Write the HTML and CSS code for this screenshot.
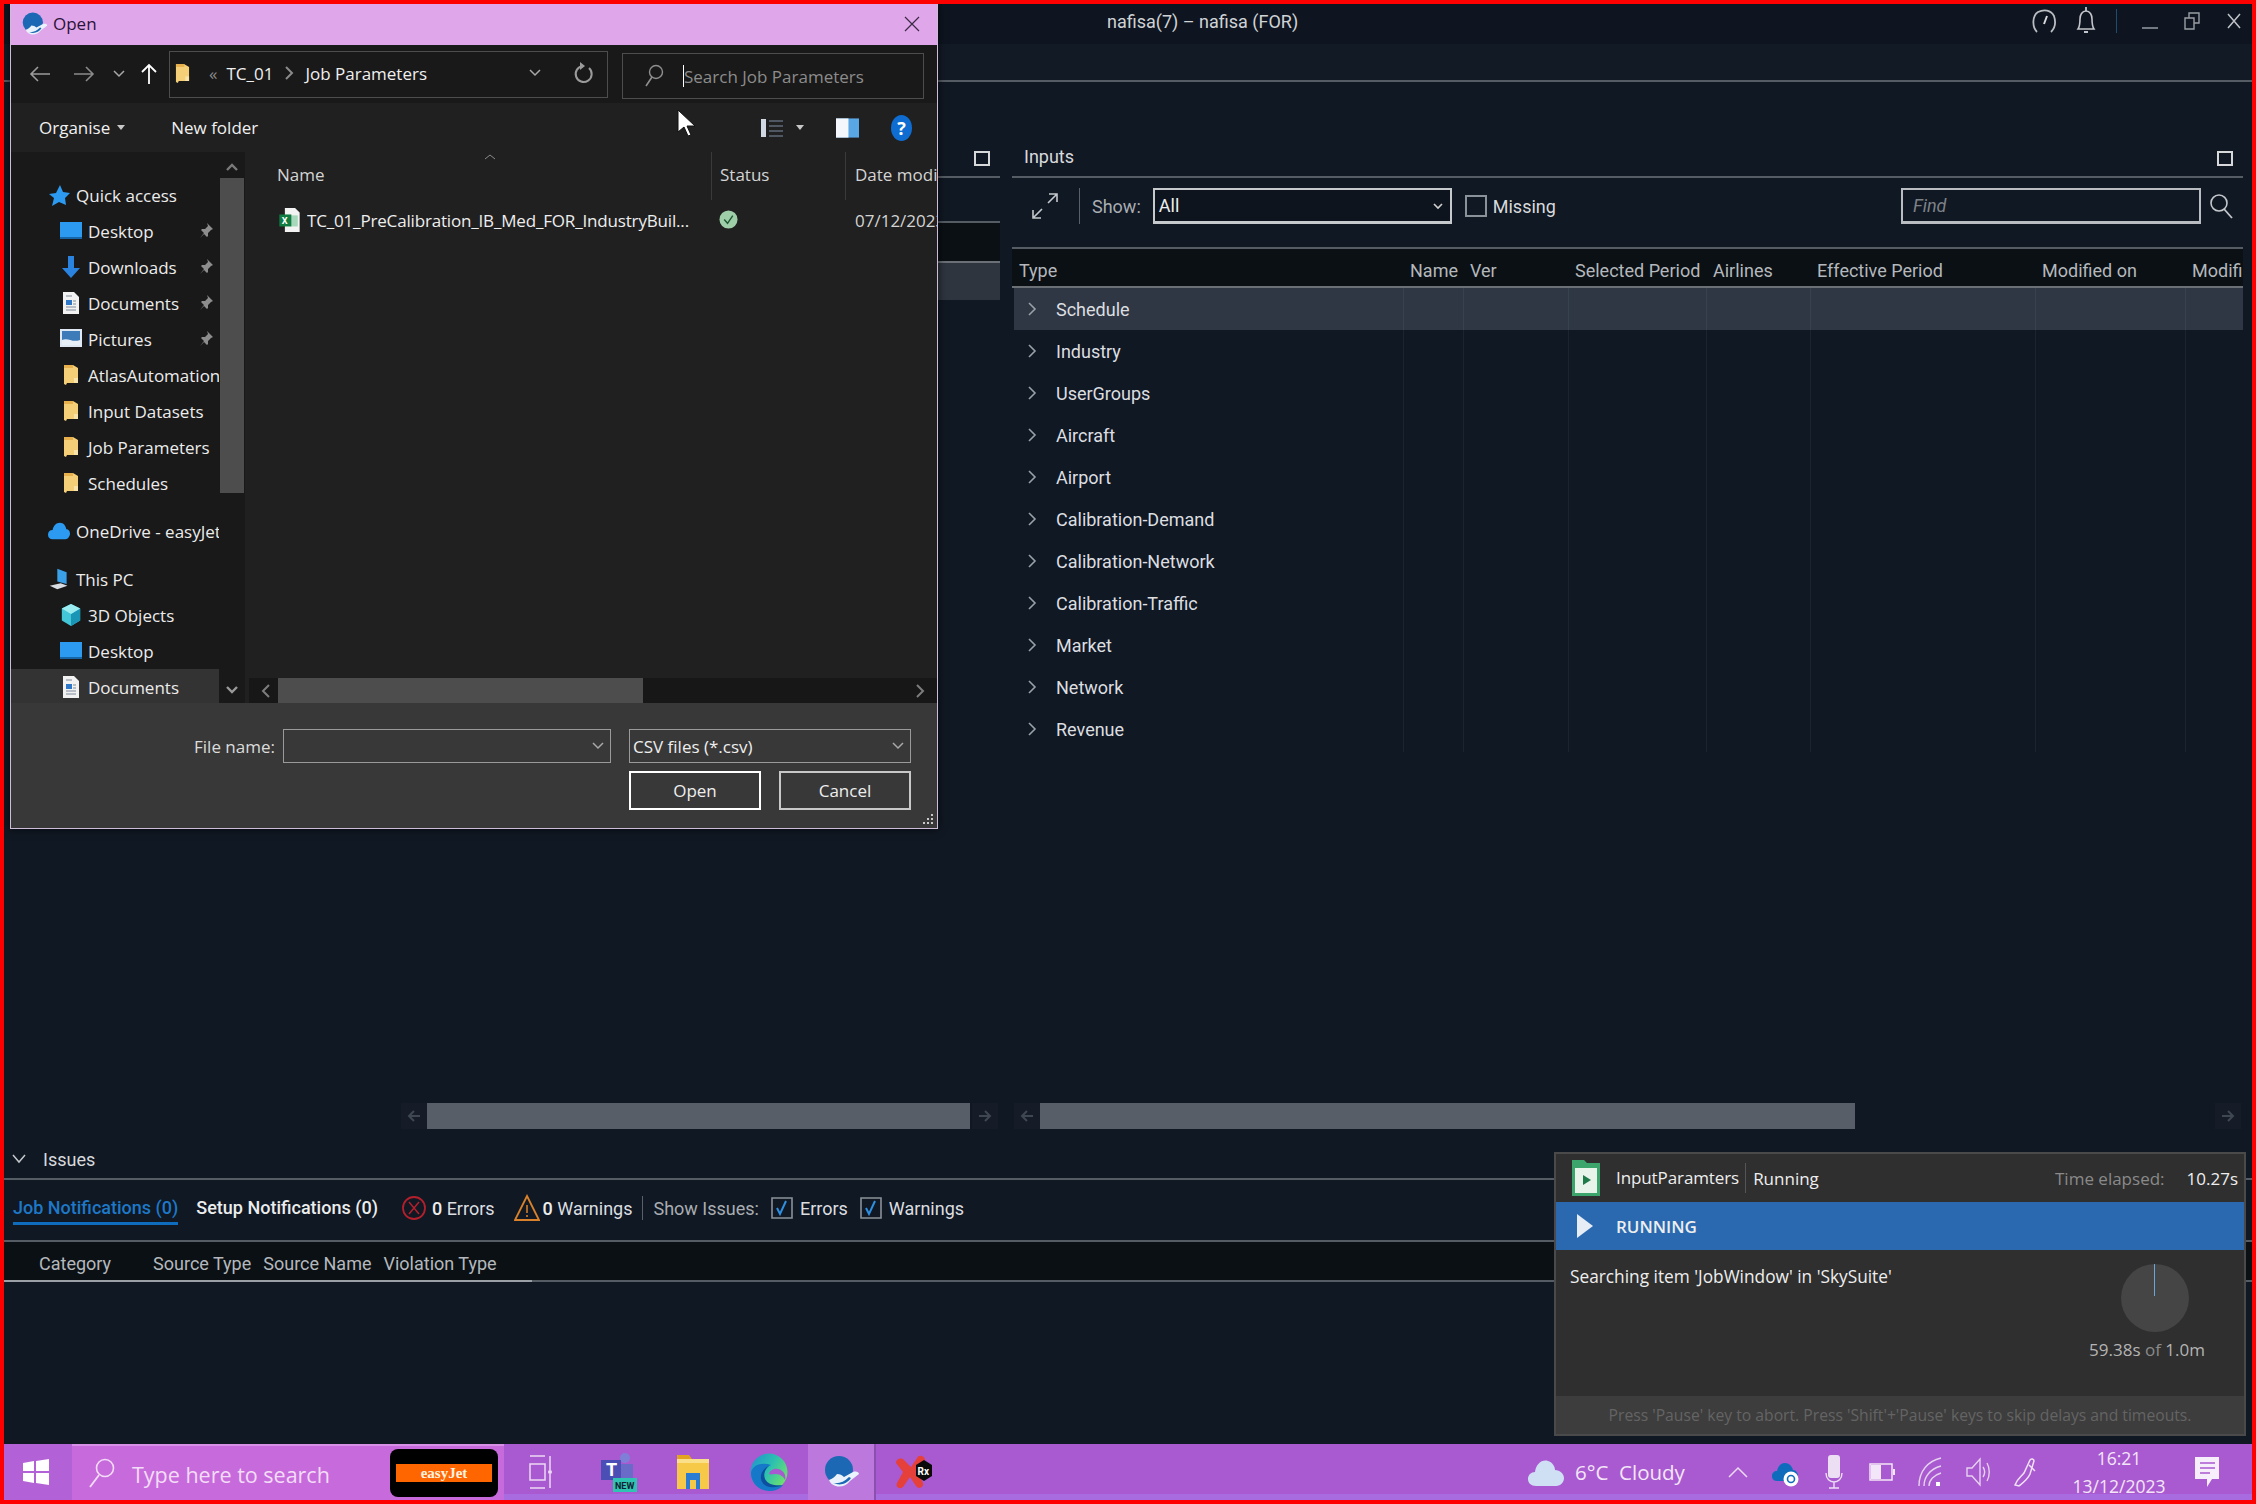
FILE: index.html
```html
<!DOCTYPE html><html>
<head><title>nafisa(7) - nafisa (FOR)</title>
	<link rel="stylesheet" href="styles.css">
</head><body>
<svg class="sprite" width="0" height="0">
	<symbol id="folder" viewBox="0 0 16 22"><path d="M1 1h9l5 3v15H4l-1 2-2-1z" fill="#f5cf78"/><path d="M1 1h9v3H1z" fill="#e8b04c"/><path d="M11 14h4v5h-4z" fill="#fae3a8"/></symbol>
	<symbol id="pin" viewBox="0 0 16 16"><path d="M9 1l6 6-2 1-3 3 0 3-1 1-3-3-4 4 4-5-3-3 1-1h3l3-3z" fill="#8d8d8d"/></symbol>
	<symbol id="chev" viewBox="0 0 12 16"><path d="M3 2l6 6-6 6" fill="none" stroke="#9aa0a8" stroke-width="1.6"/></symbol>
	<symbol id="down" viewBox="0 0 12 8"><path d="M1 1l5 5 5-5" fill="none" stroke="#a8a8a8" stroke-width="1.5"/></symbol>
	<symbol id="desktop" viewBox="0 0 22 18"><path d="M0 0h22v15H0z" fill="#2b9af0"/><path d="M0 15h22v2H0z" fill="#1565a8"/></symbol>
	<symbol id="doc" viewBox="0 0 18 22"><path d="M1 0h11l5 5v17H1z" fill="#f2f2f2"/><path d="M4 8h6v5H4z" fill="#2f78c8"/><path d="M4 4h6M4 15h10M4 18h10M11 9h3M11 12h3" stroke="#7c8a99" stroke-width="1.2"/></symbol>
	<symbol id="brand" viewBox="0 0 36 32"><circle cx="15" cy="14" r="14" fill="#1d68b4"/><path d="M5 24c3-1 6-3 8-6 3 0 5 1 7 3l9-5c3-1 6 0 6 2l-9 7c-6 8-18 7-21-1z" fill="#eaf3fb"/><path d="M9 27c6 1 11-1 16-6l2 1c-4 6-11 8-18 5z" fill="#1d68b4"/></symbol>
</svg>

<div class="screen">
	<header class="titlebar">
		<div class="app-title">nafisa(7) – nafisa (FOR)</div>
		<div class="win-tools">
			<svg class="tool-gauge" viewBox="0 0 26 28"><path d="M6 25C1 20 1 9 7 5c6-3 13-2 16 4 2 6 1 12-3 16" fill="none" stroke="#b9bdc2" stroke-width="1.8"/><path d="M13 17l3-8" stroke="#d8dadd" stroke-width="2"/></svg>
			<svg class="tool-bell" viewBox="0 0 22 30"><path d="M3 23c2-3 2-6 2-10s2-8 6-8 6 4 6 8 0 7 2 10z" fill="none" stroke="#c3c6ca" stroke-width="1.6"/><path d="M11 1v4M9 26h4" stroke="#c3c6ca" stroke-width="1.8"/></svg>
			<span class="tool-sep"></span>
			<svg class="tool-min" viewBox="0 0 16 4"><path d="M0 2h16" stroke="#8f949a" stroke-width="1.6"/></svg>
			<svg class="tool-max" viewBox="0 0 16 18"><path d="M1 6h9v11H1zM5 6V1h10v10h-5" fill="none" stroke="#9a9ea3" stroke-width="1.4"/></svg>
			<svg class="tool-close" viewBox="0 0 14 16"><path d="M1 1l12 14M13 1L1 15" stroke="#c0c3c7" stroke-width="1.5"/></svg>
		</div>
	</header>
	<div class="menubar"></div>

	<div class="workspace">
		<section class="panel panel-left">
			<div class="panel-head"><span></span><i class="panel-box"></i></div>
			<div class="left-tools"></div>
			<div class="left-cols"></div>
			<div class="left-row"></div>
			<div class="panel-fill"></div>
			<div class="hscroll"><svg class="arrow" viewBox="0 0 14 14"><path d="M13 7H2M7 2L2 7l5 5" fill="none" stroke="#3f4753" stroke-width="2"/></svg><div class="thumb thumb-a"></div><svg class="arrow arrow-end" viewBox="0 0 14 14"><path d="M1 7h11M7 2l5 5-5 5" fill="none" stroke="#3f4753" stroke-width="2"/></svg></div>
		</section>

		<section class="panel panel-right">
			<div class="panel-head"><span class="panel-name">Inputs</span><i class="panel-box"></i></div>
			<div class="input-tools">
				<svg class="expand" viewBox="0 0 26 26"><path d="M16 10L25 1M17 1h8v8M10 16l-9 9M1 17v8h8" fill="none" stroke="#c4c7cb" stroke-width="1.6"/></svg>
				<span class="v-sep"></span>
				<label class="show-label">Show:</label>
				<div class="combo"><span>All</span><svg viewBox="0 0 12 8"><path d="M2 2l4 4 4-4" fill="none" stroke="#d0d0d0" stroke-width="1.6"/></svg></div>
				<span class="check"></span>
				<span class="missing">Missing</span>
				<div class="find">Find</div>
				<svg class="find-ico" viewBox="0 0 24 26"><circle cx="10" cy="10" r="8" fill="none" stroke="#c4c7cb" stroke-width="1.6"/><path d="M15 16l8 9" stroke="#c4c7cb" stroke-width="1.8"/></svg>
			</div>
			<div class="cols cols-head">
				<span>Type</span><span>Name</span><span>Ver</span><span>Selected Period</span><span>Airlines</span><span>Effective Period</span><span>Modified on</span><span>Modifi</span>
			</div>
			<div class="rows">
				<div class="row row-on"><svg><use href="#chev"/></svg>Schedule</div>
				<div class="row"><svg><use href="#chev"/></svg>Industry</div>
				<div class="row"><svg><use href="#chev"/></svg>UserGroups</div>
				<div class="row"><svg><use href="#chev"/></svg>Aircraft</div>
				<div class="row"><svg><use href="#chev"/></svg>Airport</div>
				<div class="row"><svg><use href="#chev"/></svg>Calibration-Demand</div>
				<div class="row"><svg><use href="#chev"/></svg>Calibration-Network</div>
				<div class="row"><svg><use href="#chev"/></svg>Calibration-Traffic</div>
				<div class="row"><svg><use href="#chev"/></svg>Market</div>
				<div class="row"><svg><use href="#chev"/></svg>Network</div>
				<div class="row"><svg><use href="#chev"/></svg>Revenue</div>
			</div>
			<div class="panel-fill"></div>
			<div class="hscroll hscroll-r"><svg class="arrow" viewBox="0 0 14 14"><path d="M13 7H2M7 2L2 7l5 5" fill="none" stroke="#3f4753" stroke-width="2"/></svg><div class="thumb thumb-b"></div><svg class="arrow arrow-end" viewBox="0 0 14 14"><path d="M1 7h11M7 2l5 5-5 5" fill="none" stroke="#3f4753" stroke-width="2"/></svg></div>
		</section>
	</div>

	<section class="issues">
		<div class="issues-head">
			<svg viewBox="0 0 14 10"><path d="M1 1l6 7 6-7" fill="none" stroke="#c4c7cb" stroke-width="1.5"/></svg>
			<span>Issues</span>
		</div>
		<div class="issues-tabs">
			<span class="tab tab-on">Job Notifications (0)</span>
			<span class="tab tab-b">Setup Notifications (0)</span>
			<svg class="err-ico" viewBox="0 0 24 28"><circle cx="12" cy="14" r="11" fill="none" stroke="#b3202c" stroke-width="1.800"/><path d="M7 8l10 12M17 8L7 20" stroke="#b3202c" stroke-width="1.500"/></svg>
			<span class="count"><b>0</b> Errors</span>
			<svg class="warn-ico" viewBox="0 0 26 28"><path d="M13 2l12 24H1z" fill="none" stroke="#d9822b" stroke-width="1.800"/><path d="M13 11v8M13 21v2" stroke="#d9822b" stroke-width="1.500"/></svg>
			<span class="count"><b>0</b> Warnings</span>
			<span class="v-sep tab-sep"></span>
			<span class="show-issues">Show Issues:</span>
			<svg class="tick" viewBox="0 0 22 22"><path d="M1 1h20v20H1z" fill="none" stroke="#8b9199" stroke-width="1.600"/><path d="M6 11l3 6 6-13" fill="none" stroke="#2f8fe0" stroke-width="2"/></svg>
			<span class="tick-label">Errors</span>
			<svg class="tick" viewBox="0 0 22 22"><path d="M1 1h20v20H1z" fill="none" stroke="#8b9199" stroke-width="1.600"/><path d="M6 11l3 6 6-13" fill="none" stroke="#2f8fe0" stroke-width="2"/></svg>
			<span class="tick-label">Warnings</span>
		</div>
		<div class="issue-bar">
			<div class="issue-cols">
				<span class="c1">Category</span><span class="c2">Source Type</span><span class="c3">Source Name</span><span class="c4">Violation Type</span>
			</div>
		</div>
	</section>

	<footer class="taskbar">
		<div class="start"><svg viewBox="0 0 26 26"><path d="M0 4l11-2v10H0zM13 2l13-2v12H13zM0 14h11v10L0 22zM13 14h13v12l-13-2z" fill="#fff"/></svg></div>
		<div class="search">
			<svg viewBox="0 0 26 30"><circle cx="16" cy="10" r="8.500" fill="none" stroke="#f3dcf7" stroke-width="1.600"/><path d="M10 17L1 29" stroke="#f3dcf7" stroke-width="1.800"/></svg>
			<span class="search-text">Type here to search</span>
			<div class="easy"><span>easyJet</span></div>
		</div>
		<div class="task"><svg class="ico-view" viewBox="0 0 26 34"><path d="M1 1h15M1 33h15M1 9h15v16H1zM21 1v14M21 19v14" fill="none" stroke="#ecd9f4" stroke-width="1.500"/><circle cx="21" cy="17" r="2" fill="#ecd9f4"/></svg></div>
		<div class="task"><svg class="ico-teams" viewBox="0 0 38 40"><circle cx="26" cy="6" r="5" fill="#7f7fd8"/><path d="M18 12h16v18H18z" fill="#6a6bc8"/><path d="M2 8h20v20H2z" fill="#4b4fb5"/><text x="7" y="24" class="teams-t">T</text><path d="M14 26h24v14H14z" fill="#2fc4b2"/><text x="16" y="37" class="teams-new">NEW</text></svg></div>
		<div class="task"><svg class="ico-explorer" viewBox="0 0 34 36"><path d="M1 1h12l3 4H1z" fill="#e3a520"/><path d="M1 5h32v30H1z" fill="#f7c948"/><path d="M1 5h32v4H1z" fill="#fbe08a"/><path d="M10 19h14v16H10z" fill="#2b7cd3"/><path d="M14 26h6v9h-6z" fill="#f7c948"/></svg></div>
		<div class="task"><svg class="ico-edge" viewBox="0 0 38 38"><defs><linearGradient id="eg" x1="0" y1="0" x2="1" y2=".6"><stop offset="0" stop-color="#1f8fd0"/><stop offset=".55" stop-color="#2cc0b0"/><stop offset="1" stop-color="#6be070"/></linearGradient></defs><circle cx="19" cy="19" r="18.500" fill="url(#eg)"/><path d="M1 20C1 30 9 38 19 38c6 0 11-2 14-6-7 3-15 1-18-5-3-7 1-13 6-15C12 9 2 12 1 20z" fill="#1578c8"/><path d="M11 26c1 7 11 11 22 6-7 1-15 0-18-6-2-5 0-10 4-13-5 2-9 7-8 13z" fill="#0d4f9e"/><path d="M19 21c1-5 9-7 13-3 3 2 4 6 3 9-1-3-5-6-9-6-3 0-5 1-7 0z" fill="#a95ad0"/></svg></div>
		<div class="task task-on"><svg class="ico-brand"><use href="#brand"/></svg></div>
		<span class="task-sep"></span>
		<div class="task"><svg class="ico-rx" viewBox="0 0 38 36"><path d="M1 9c0-4 5-6 8-3l7 7 6-9c2-4 8-2 8 2l-7 13 5 10c1 4-4 7-7 3l-6-9-7 10c-3 3-8 0-6-4l6-11z" fill="#e5403a"/><path d="M21 11l8-5 8 5v11l-8 5-8-5z" fill="#0b0b0b"/><text x="22.500" y="21" class="rx-t">Rx</text></svg></div>

		<div class="weather">
			<svg viewBox="0 0 38 32"><path d="M9 30c-5 0-8-3-8-7s3-7 7-7c1-8 7-13 13-11 4 1 7 5 7 9 5 0 9 4 9 8s-3 8-8 8z" fill="#cfe0f4"/></svg>
			<span>6°C&nbsp; Cloudy</span>
		</div>
		<div class="tray"><svg class="tray-chev" viewBox="0 0 20 12"><path d="M1 11l9-9 9 9" fill="none" stroke="#ecd9f4" stroke-width="1.500"/></svg></div>
		<div class="tray"><svg class="tray-cloud" viewBox="0 0 28 30"><path d="M5 24c-4 0-5-3-5-5 0-3 2-5 5-5 1-5 4-8 8-8s7 3 8 7c3 0 5 3 5 6s-2 5-5 5z" fill="#0f6cbd"/><circle cx="19" cy="22" r="7.500" fill="#fff"/><circle cx="19" cy="22" r="3.500" fill="none" stroke="#0f6cbd" stroke-width="1.600"/></svg></div>
		<div class="tray"><svg class="tray-mic" viewBox="0 0 18 34"><rect x="3" y="0" width="12" height="23" rx="3" fill="#ecdff3"/><path d="M1 18c0 6 4 9 8 9s8-3 8-9M9 27v6M4 33h10" fill="none" stroke="#ecdff3" stroke-width="1.400"/></svg></div>
		<div class="tray"><svg class="tray-batt" viewBox="0 0 26 20"><path d="M1 2h22v16H1z" fill="none" stroke="#f3e6f8" stroke-width="1.500"/><path d="M2 3h10v14H2z" fill="#f3e6f8"/><path d="M24 7h2v6h-2z" fill="#f3e6f8"/></svg></div>
		<div class="tray"><svg class="tray-wifi" viewBox="0 0 24 30"><path d="M1 29C1 14 10 4 23 1M6 29c0-9 6-17 17-20M11 29c0-6 5-11 12-13" fill="none" stroke="#e6d2ef" stroke-width="1.400"/><path d="M18 25h4v4h-4z" fill="#fff"/></svg></div>
		<div class="tray"><svg class="tray-vol" viewBox="0 0 24 30"><path d="M1 11h5l8-9v26l-8-9H1z" fill="none" stroke="#e6d2ef" stroke-width="1.400"/><path d="M17 10c2 3 2 7 0 10M21 6c3 5 3 13 0 18" fill="none" stroke="#e6d2ef" stroke-width="1.400"/></svg></div>
		<div class="tray"><svg class="tray-pen" viewBox="0 0 24 30"><path d="M1 28c2-6 6-8 9-12l6-13c1-2 4-1 4 1l-4 13c-2 5-6 8-11 12zM15 8l6 6" fill="none" stroke="#f0e2f6" stroke-width="1.500"/></svg></div>
		<div class="clock"><span>16:21</span><span>13/12/2023</span></div>
		<div class="notif-btn"><svg viewBox="0 0 26 30"><path d="M1 0h24v22h-7l-5 8v-8H1z" fill="#f7eefb"/><path d="M6 6h15M6 11h15M6 16h10" stroke="#a95ad0" stroke-width="1.500"/></svg></div>
	</footer>

	<!-- file dialog -->
	<div class="dialog">
		<div class="dlg-title">
			<svg class="dlg-brand"><use href="#brand"/></svg>
			<span>Open</span>
			<svg class="dlg-close" viewBox="0 0 16 16"><path d="M1 1l14 14M15 1L1 15" stroke="#3a2a44" stroke-width="1.200"/></svg>
		</div>
		<div class="dlg-nav">
			<div class="nav-btn"><svg class="arr" viewBox="0 0 22 18"><path d="M21 9H2M9 2L2 9l7 7" fill="none" stroke="#9b9b9b" stroke-width="1.600"/></svg></div>
			<div class="nav-btn"><svg class="arr" viewBox="0 0 22 18"><path d="M1 9h19M13 2l7 7-7 7" fill="none" stroke="#8a8a8a" stroke-width="1.600"/></svg></div>
			<div class="nav-btn nav-small"><svg class="mini"><use href="#down"/></svg></div>
			<div class="nav-btn nav-up"><svg class="arr-up" viewBox="0 0 18 22"><path d="M9 21V2M2 9l7-7 7 7" fill="none" stroke="#fff" stroke-width="1.800"/></svg></div>
			<div class="address">
				<svg class="addr-folder"><use href="#folder"/></svg>
				<span class="crumb-more">«</span>
				<span>TC_01</span>
				<svg class="crumb-chev" viewBox="0 0 12 16"><path d="M3 2l6 6-6 6" fill="none" stroke="#8a8a8a" stroke-width="2"/></svg>
				<span>Job Parameters</span>
				<svg class="addr-down"><use href="#down"/></svg>
				<svg class="addr-ref" viewBox="0 0 20 22"><path d="M16 6a8 8 0 1 1-6-2" fill="none" stroke="#9b9b9b" stroke-width="2"/><path d="M7 0v8l5-4z" fill="#9b9b9b"/></svg>
			</div>
			<div class="dlg-search">
				<svg viewBox="0 0 20 24"><circle cx="12" cy="8" r="6.500" fill="none" stroke="#8f8f8f" stroke-width="1.400"/><path d="M8 13l-6 9" stroke="#8f8f8f" stroke-width="1.600"/></svg>
				<span class="caret"></span><span class="ph">Search Job Parameters</span>
			</div>
		</div>
		<div class="dlg-tools">
			<span>Organise</span><i class="tri"></i>
			<span class="new-folder">New folder</span>
			<div class="tools-right">
				<svg class="ico-list" viewBox="0 0 22 20"><path d="M0 1h5v18H0z" fill="#cfd8e3"/><path d="M8 3h14M8 8h14M8 13h14M8 18h14" stroke="#7f8fa3" stroke-width="1.200"/></svg>
				<i class="tri tri-view"></i>
				<svg class="ico-pane" viewBox="0 0 24 20"><path d="M0 0h24v20H0z" fill="#5aa7e6"/><path d="M0 0h13v20H0z" fill="#f4f7fb"/></svg>
				<span class="help">?</span>
			</div>
		</div>
		<div class="dlg-main">
			<nav class="tree">
				<div class="node node-top"><svg class="nico" viewBox="0 0 22 22"><path d="M12 1l3 7 7 1-5 5 1 7-7-3-7 4 2-8-5-4 7-1z" fill="#2b9af0"/></svg><span>Quick access</span></div>
				<div class="node"><svg class="nico"><use href="#desktop"/></svg><span>Desktop</span><svg class="pin"><use href="#pin"/></svg></div>
				<div class="node"><svg class="nico" viewBox="0 0 22 22"><path d="M8 0h6v12h6L11 22 2 12h6z" fill="#2b83e0"/></svg><span>Downloads</span><svg class="pin"><use href="#pin"/></svg></div>
				<div class="node"><svg class="nico"><use href="#doc"/></svg><span>Documents</span><svg class="pin"><use href="#pin"/></svg></div>
				<div class="node"><svg class="nico" viewBox="0 0 22 20"><path d="M0 0h22v18H0z" fill="#dfe9f3"/><path d="M2 2h18v14H2z" fill="#3d7cb8"/><path d="M2 11c6-3 10 3 18 0v5H2z" fill="#e8f1f8"/></svg><span>Pictures</span><svg class="pin"><use href="#pin"/></svg></div>
				<div class="node"><svg class="nico"><use href="#folder"/></svg><span>AtlasAutomation</span></div>
				<div class="node"><svg class="nico"><use href="#folder"/></svg><span>Input Datasets</span></div>
				<div class="node"><svg class="nico"><use href="#folder"/></svg><span>Job Parameters</span></div>
				<div class="node"><svg class="nico"><use href="#folder"/></svg><span>Schedules</span></div>
				<div class="node node-top node-group"><svg class="nico" viewBox="0 0 24 18"><path d="M5 18c-3 0-5-2-5-5s2-5 5-5c1-5 4-8 8-8s6 3 7 7c3 0 4 3 4 5s-2 6-5 6z" fill="#2b9af0"/></svg><span>OneDrive - easyJet</span></div>
				<div class="node node-top node-group"><svg class="nico" viewBox="0 0 24 26"><path d="M10 1l11 4v14l-11-3z" fill="#3aa0e8"/><path d="M1 21l13-3 8 3-12 4z" fill="#d8dde3"/></svg><span>This PC</span></div>
				<div class="node"><svg class="nico" viewBox="0 0 22 24"><path d="M11 0l10 5v13l-10 6L1 18V5z" fill="#42c6d8"/><path d="M11 11l10-6v13l-10 6z" fill="#1a95b5"/><path d="M11 0l10 5-10 6L1 5z" fill="#9becf0"/></svg><span>3D Objects</span></div>
				<div class="node"><svg class="nico"><use href="#desktop"/></svg><span>Desktop</span></div>
				<div class="node node-sel"><svg class="nico"><use href="#doc"/></svg><span>Documents</span></div>
			</nav>
			<div class="vbar">
				<svg viewBox="0 0 14 10"><path d="M2 8l5-5 5 5" fill="none" stroke="#7a7a7a" stroke-width="2.400"/></svg>
				<div class="vthumb"></div>
				<svg class="vbar-end" viewBox="0 0 14 10"><path d="M2 2l5 5 5-5" fill="none" stroke="#9a9a9a" stroke-width="2.400"/></svg>
			</div>
			<div class="files">
				<div class="files-head">
					<span class="fh-name">Name</span><span class="fh-status">Status</span><span class="fh-date">Date modified</span>
					<svg class="sort" viewBox="0 0 12 6"><path d="M1 5l5-4 5 4" fill="none" stroke="#8a8a8a" stroke-width="1"/></svg>
				</div>
				<div class="file-row">
					<svg class="xls" viewBox="0 0 22 26"><path d="M6 0h11l5 5v21H6z" fill="#f3f3f3"/><path d="M12 8h8v12h-8z" fill="#a7d8bb"/><path d="M0 7h13v13H0z" fill="#107c41"/><text x="2.500" y="17" class="xls-t">X</text></svg>
					<span class="file-name">TC_01_PreCalibration_IB_Med_FOR_IndustryBuil...</span>
					<svg class="synced" viewBox="0 0 20 20"><circle cx="10" cy="10" r="9.500" fill="#9fcfa8"/><path d="M5.500 10l3.500 4 5.500-8" fill="none" stroke="#1f5a35" stroke-width="1.500"/></svg>
					<span class="file-date">07/12/2023 16:05</span>
				</div>
				<div class="files-fill"></div>
				<div class="files-scroll">
					<svg viewBox="0 0 10 14"><path d="M8 1L2 7l6 6" fill="none" stroke="#7d7d7d" stroke-width="2"/></svg>
					<div class="fthumb"></div>
					<svg class="fs-end" viewBox="0 0 10 14"><path d="M2 1l6 6-6 6" fill="none" stroke="#7d7d7d" stroke-width="2"/></svg>
				</div>
			</div>
		</div>
		<div class="dlg-bottom">
			<div class="name-row">
				<label>File name:</label>
				<div class="field field-name"><svg><use href="#down"/></svg></div>
				<div class="field field-type"><span>CSV files (*.csv)</span><svg><use href="#down"/></svg></div>
			</div>
			<div class="btn-row">
				<button class="btn btn-main">Open</button>
				<button class="btn">Cancel</button>
			</div>
			<svg class="grip" viewBox="0 0 12 12"><path d="M9 0h2v2H9zM5 4h2v2H5zM9 4h2v2H9zM1 8h2v2H1zM5 8h2v2H5zM9 8h2v2H9z" fill="#c8c8c8"/></svg>
		</div>
	</div>

	<svg class="cursor" viewBox="0 0 20 26"><path d="M1 0v22l6-5 4 9 3-1-4-9h8z" fill="#fff" stroke="#111" stroke-width="1"/></svg>

	<!-- job progress popup -->
	<aside class="job">
		<div class="job-head">
			<svg class="job-ico" viewBox="0 0 28 36"><path d="M0 0h12l3 3h13v33H0z" fill="#3ba56c"/><path d="M3 8h22v25H3z" fill="#e8f3ea"/><path d="M11 15l8 5-8 5z" fill="#1f7a4a"/></svg>
			<span class="job-name">InputParamters</span>
			<span class="job-state">Running</span>
			<span class="job-time">Time elapsed:</span>
			<span class="job-secs">10.27s</span>
		</div>
		<div class="job-bar"><svg viewBox="0 0 16 24"><path d="M0 0l16 12L0 24z" fill="#e6edf5"/></svg><span>RUNNING</span></div>
		<div class="job-body">
			<p>Searching item 'JobWindow' in 'SkySuite'</p>
			<div class="job-wait">
				<div class="pie"></div>
				<div class="wait-text">59.38s <small>of</small> 1.0m</div>
			</div>
		</div>
		<div class="job-foot">Press 'Pause' key to abort. Press 'Shift'+'Pause' keys to skip delays and timeouts.</div>
	</aside>
</div>
</body></html>
```

FILE: styles.css
```css
html,body{margin:0;padding:0;background:#101823;}
body{font-family:Roboto,"Liberation Sans",sans-serif;font-size:18px;color:#d8dadd;}
svg{display:block;flex:none;}
.sprite{position:absolute;}
.screen{position:relative;box-sizing:border-box;width:2256px;height:1504px;border:4px solid #f00;display:flex;flex-direction:column;overflow:hidden;background:#101823;}

/* app chrome */
.titlebar{box-sizing:border-box;height:40px;flex:none;display:flex;align-items:center;padding-bottom:6px;background:#0e1520;}
.app-title{margin-left:1103px;color:#d0d3d6;}
.win-tools{margin-left:auto;display:flex;align-items:center;}
.tool-gauge{width:26px;height:28px;}
.tool-bell{width:22px;height:30px;margin-left:18px;}
.tool-sep{width:1px;height:24px;background:#1f4a73;margin-left:19px;}
.tool-min{width:16px;height:4px;margin:14px 0 0 25px;}
.tool-max{width:16px;height:18px;margin-left:26px;}
.tool-close{width:14px;height:16px;margin:0 11px 0 27px;}
.menubar{height:36px;flex:none;box-sizing:content-box;border-bottom:2px solid #565c64;background:#121a26;}

.workspace{flex:1;min-height:0;display:flex;padding:0 9px 0 399px;gap:12px;}
.panel{display:flex;flex-direction:column;}
.panel-left{width:597px;flex:none;}
.panel-right{flex:1;min-width:0;}
.panel-fill{flex:1;}
.panel-head{box-sizing:border-box;height:96px;flex:none;display:flex;align-items:flex-end;justify-content:space-between;border-bottom:2px solid #565c64;padding:0 10px 8px 12px;}
.panel-name{color:#d8dadd;line-height:22px;}
.panel-box{display:block;box-sizing:border-box;width:16px;height:15px;border:2px solid #d6d8da;margin-bottom:2px;}
.left-tools{height:43px;flex:none;border-bottom:2px solid #565c64;}
.left-cols{height:38px;flex:none;background:#0b1015;}
.left-row{height:39px;flex:none;border-top:2px solid #6b7076;background:#2e353f;box-sizing:border-box;}

.input-tools{box-sizing:border-box;height:71px;flex:none;display:flex;align-items:center;padding:11px 0 24px 18px;border-bottom:2px solid #565c64;}
.expand{width:26px;height:26px;margin:0 0 0 2px;}
.v-sep{display:block;width:1px;height:36px;background:#5a6068;margin-left:21px;}
.show-label{margin-left:12px;color:#a9adb2;}
.combo{box-sizing:border-box;width:299px;height:36px;margin-left:12px;border:2px solid #c7cacd;border-bottom-width:3px;display:flex;align-items:center;justify-content:space-between;padding:0 6px 0 4px;color:#eceded;background:#0e141d;}
.combo svg{width:12px;height:8px;}
.check{display:block;box-sizing:border-box;width:22px;height:22px;margin-left:13px;border:2px solid #8b9199;}
.missing{margin-left:6px;color:#d8dadd;}
.find{box-sizing:border-box;width:300px;height:36px;margin-left:auto;border:2px solid #b9bcc0;border-bottom-width:3px;padding:0 10px;line-height:32px;font-style:italic;color:#7d8288;}
.find-ico{width:24px;height:26px;margin:0 10px 0 8px;}

.cols{display:grid;grid-template-columns:391px 60px 105px 138px 104px 225px 150px 58px;}
.cols-head{box-sizing:border-box;height:39px;flex:none;align-items:center;padding-top:5px;background:#0b1015;border-bottom:2px solid #6b7076;color:#b4b8bc;}
.cols-head span{padding-left:7px;white-space:nowrap;overflow:hidden;}
.rows{flex:none;height:464px;margin-left:2px;background:
	linear-gradient(#1c2430,#1c2430) 389px 0/1px 100% no-repeat,
	linear-gradient(#1c2430,#1c2430) 449px 0/1px 100% no-repeat,
	linear-gradient(#1c2430,#1c2430) 554px 0/1px 100% no-repeat,
	linear-gradient(#1c2430,#1c2430) 692px 0/1px 100% no-repeat,
	linear-gradient(#1c2430,#1c2430) 796px 0/1px 100% no-repeat,
	linear-gradient(#1c2430,#1c2430) 1021px 0/1px 100% no-repeat,
	linear-gradient(#1c2430,#1c2430) 1171px 0/1px 100% no-repeat;}
.row{height:42px;display:flex;align-items:center;padding-left:12px;color:#dcdee0;}
.row svg{width:12px;height:16px;margin-right:18px;}
.row-on{background:rgba(160,170,185,.22);}

.hscroll{height:26px;flex:none;display:flex;margin-bottom:11px;margin-right:2px;}
.hscroll-r{padding-left:2px;}
.arrow{width:26px;height:26px;padding:6px;box-sizing:border-box;background:#151c27;}
.arrow-end{margin-left:auto;}
.thumb{height:26px;background:#575e68;}
.thumb-a{width:543px;}
.thumb-b{width:815px;}
.panel-left .hscroll{margin-left:-2px;}

/* issues */
.issues{height:304px;flex:none;display:flex;flex-direction:column;}
.issues-head{box-sizing:border-box;height:40px;flex:none;display:flex;align-items:center;padding-left:8px;border-bottom:2px solid #565c64;}
.issues-head svg{width:14px;height:10px;margin-right:17px;}
.issues-head span{color:#d8dadd;}
.issues-tabs{box-sizing:border-box;height:62px;flex:none;display:flex;align-items:center;padding:0 0 4px 9px;border-bottom:2px solid #565c64;color:#dcdee0;}
.tab{display:block;font-weight:500;padding:6px 0 4px;border-bottom:3px solid transparent;white-space:nowrap;}
.tab-on{color:#1e78c8;border-bottom-color:#0f6cbd;}
.tab-b{margin-left:18px;color:#eceded;}
.err-ico{width:24px;height:28px;margin:0 6px 0 24px;}
.warn-ico{width:26px;height:28px;margin:0 3px 0 19px;}
.count b{font-weight:500;color:#eceded;}
.tab-sep{height:24px;margin-left:10px;}
.show-issues{margin-left:10px;color:#a9adb2;}
.tick{width:22px;height:22px;margin:0 7px 0 12px;}
.tick-label{color:#dcdee0;}
.issue-bar{box-sizing:border-box;height:40px;flex:none;background:#0b1015;border-bottom:2px solid #565c64;}
.issue-cols{box-sizing:border-box;width:528px;height:40px;border-bottom:2px solid #9ba0a6;display:flex;align-items:center;color:#b4b8bc;padding-top:4px;}
.issue-cols span{white-space:nowrap;}
.c1{margin-left:35px;}
.c2{margin-left:42px;}
.c3{margin-left:12px;}
.c4{margin-left:12px;}

/* taskbar */
.taskbar{height:56px;flex:none;display:flex;align-items:center;background:linear-gradient(#a95ad0 90%,#a86be0 90%);color:#f3e6f8;}
.start{box-sizing:border-box;width:68px;height:56px;flex:none;display:flex;align-items:center;padding-left:19px;background:#b262d6;}
.start svg{width:26px;height:26px;}
.search{box-sizing:border-box;width:432px;height:56px;flex:none;display:flex;align-items:center;padding-left:17px;background:#c76bdc;border-top:2px solid #d88fe6;}
.search svg{width:26px;height:30px;}
.search-text{font-family:"Open Sans","Noto Sans",sans-serif;font-size:21.500px;color:#f3dcf7;margin-left:17px;white-space:nowrap;padding-top:2px;}
.easy{box-sizing:border-box;width:108px;height:48px;margin-left:auto;margin-right:6px;background:#000;border-radius:8px;display:flex;align-items:center;justify-content:center;}
.easy span{display:block;width:96px;height:18px;background:#ff6600;text-align:center;font:bold 15px/18px "Liberation Serif",serif;color:#fff3e2;}
.task{width:76px;height:56px;flex:none;display:flex;align-items:center;justify-content:center;}
.task-on{width:66px;background:#bd78dd;}
.task-sep{display:block;width:2px;height:56px;background:#8b4fae;flex:none;}
.ico-view{width:26px;height:34px;}
.ico-teams{width:38px;height:40px;}
.ico-explorer{width:34px;height:36px;margin-right:2px;}
.ico-edge{width:38px;height:38px;margin-right:3px;}
.ico-brand{width:36px;height:32px;margin-left:2px;}
.ico-rx{width:38px;height:36px;}
.teams-t{font:bold 18px Roboto,sans-serif;fill:#fff;}
.teams-new{font:bold 9px Roboto,sans-serif;fill:#123;}
.rx-t{font:bold 10px Roboto,sans-serif;fill:#fff;}
.weather{margin-left:auto;width:187px;flex:none;display:flex;align-items:center;font-family:"Open Sans","Noto Sans",sans-serif;font-size:20.500px;white-space:nowrap;}
.weather svg{width:38px;height:32px;margin-right:10px;}
.tray{width:48px;height:56px;flex:none;display:flex;align-items:center;justify-content:center;}
.tray-chev{width:20px;height:12px;}
.tray-cloud{width:28px;height:30px;}
.tray-mic{width:18px;height:34px;}
.tray-batt{width:26px;height:20px;}
.tray-wifi{width:24px;height:30px;}
.tray-vol{width:24px;height:30px;}
.tray-pen{width:24px;height:30px;}
.clock{width:138px;flex:none;display:flex;flex-direction:column;align-items:center;gap:6px;font-family:"Open Sans","Noto Sans",sans-serif;font-size:17.500px;line-height:22px;}
.notif-btn{width:64px;flex:none;box-sizing:border-box;padding:0 14px 0 0;display:flex;justify-content:center;}
.notif-btn svg{width:26px;height:30px;margin-left:-13px;}

/* open dialog */
.dialog{position:absolute;left:6px;top:0;box-sizing:border-box;width:928px;height:825px;border:1px solid #cdbcd8;border-top:none;display:flex;flex-direction:column;background:#202020;color:#f0f0f0;font-family:"Open Sans","Noto Sans",sans-serif;font-size:17px;box-shadow:0 0 8px rgba(0,0,0,.7);}
.dlg-title{box-sizing:border-box;height:41px;flex:none;display:flex;align-items:center;background:#dfa6ea;color:#2b1238;padding:0 0 2px 11px;}
.dlg-brand{width:26px;height:24px;margin-right:5px;}
.dlg-close{width:16px;height:16px;margin-left:auto;margin-right:17px;}
.dlg-nav{height:58px;flex:none;display:flex;align-items:center;padding-left:7px;background:#191919;}
.nav-btn{width:44px;height:44px;flex:none;display:flex;align-items:center;justify-content:center;}
.nav-small{width:26px;}
.nav-up{width:34px;margin-right:3px;}
.arr{width:22px;height:18px;}
.arr-up{width:18px;height:22px;}
.mini{width:12px;height:8px;}
.address{box-sizing:border-box;width:439px;height:47px;flex:none;display:flex;align-items:center;border:1px solid #4d4d4d;padding:0 0 2px 5px;white-space:nowrap;}
.addr-folder{width:15px;height:21px;margin-right:19px;}
.crumb-more{color:#8a8a8a;margin-right:9px;}
.crumb-chev{width:12px;height:16px;margin:0 10px;}
.addr-down{width:12px;height:8px;margin-left:auto;}
.addr-ref{width:20px;height:22px;margin:0 14px 0 32px;}
.dlg-search{box-sizing:border-box;width:302px;height:46px;flex:none;margin:3px 0 0 14px;display:flex;align-items:center;border:1px solid #4d4d4d;padding-left:21px;color:#8c8c8c;white-space:nowrap;}
.dlg-search svg{width:20px;height:24px;margin-right:19px;}
.caret{display:block;width:1px;height:22px;background:#fff;}
.ph{margin-left:0;padding-top:2px;}
.dlg-tools{box-sizing:border-box;height:49px;flex:none;display:flex;align-items:center;padding:0 25px 0 28px;background:#202020;white-space:nowrap;}
.tri{display:block;width:0;height:0;border:4px solid transparent;border-top:5px solid #c8c8c8;border-bottom:none;margin-left:7px;}
.new-folder{margin-left:46px;}
.tools-right{margin-left:auto;display:flex;align-items:center;}
.ico-list{width:22px;height:20px;}
.tri-view{margin:0 32px 0 13px;}
.ico-pane{width:23px;height:20px;}
.help{display:block;width:21px;height:26px;margin-left:32px;border-radius:50%;background:#0f6cd0;color:#fff;text-align:center;font:bold 18px/26px "Open Sans",sans-serif;}

.dlg-main{flex:1;min-height:0;display:flex;}
.tree{box-sizing:border-box;width:208px;flex:none;padding-top:25px;background:#191919;overflow:hidden;}
.node{height:36px;display:flex;align-items:center;padding-left:49px;white-space:nowrap;color:#ececec;position:relative;}
.node span{flex:none;}
.nico{width:22px;height:22px;margin-right:6px;}
.node-top{padding-left:37px;}
.node-group{margin-top:12px;}
.pin{position:absolute;left:187px;top:9px;width:16px;height:16px;}
.node-sel{background:#333;}
.vbar{box-sizing:border-box;width:26px;flex:none;display:flex;flex-direction:column;align-items:center;margin-right:4px;background:#191919;}
.vbar svg{width:14px;height:10px;margin-top:10px;margin-bottom:6px;}
.vthumb{width:24px;height:315px;background:#4d4d4d;}
.vbar-end{margin-top:auto!important;margin-bottom:8px!important;}
.files{flex:1;min-width:0;display:flex;flex-direction:column;position:relative;overflow:hidden;}
.files-head{height:48px;flex:none;position:relative;color:#d4d4d4;white-space:nowrap;}
.files-head span{position:absolute;top:0;height:48px;box-sizing:border-box;padding-top:11px;line-height:24px;}
.fh-name{left:28px;}
.fh-status{left:462px;border-left:1px solid #3a3a3a;padding-left:8px;}
.fh-date{left:596px;border-left:1px solid #3a3a3a;padding-left:9px;}
.sort{position:absolute;left:235px;top:2px;width:12px;height:6px;}
.file-row{height:40px;flex:none;display:flex;align-items:center;white-space:nowrap;padding-left:30px;}
.xls{width:21px;height:24px;}
.xls-t{font:bold 10px Roboto,sans-serif;fill:#fff;}
.file-name{display:block;width:404px;margin-left:7px;flex:none;overflow:hidden;color:#eee;letter-spacing:-.17px;}
.synced{width:19px;height:19px;margin:-2px 0 0 8px;}
.file-date{margin-left:117px;color:#d4d4d4;}
.files-fill{flex:1;}
.files-scroll{height:25px;flex:none;display:flex;align-items:center;background:#171717;padding-left:12px;}
.files-scroll svg{width:10px;height:14px;}
.fthumb{width:365px;height:25px;background:#4d4d4d;margin-left:7px;}
.fs-end{margin-left:auto;margin-right:12px;}

.dlg-bottom{height:125px;flex:none;position:relative;background:#383838;box-sizing:border-box;padding:26px 26px 0 0;display:flex;flex-direction:column;align-items:flex-end;}
.name-row{display:flex;align-items:center;height:34px;}
.name-row label{color:#dcdcdc;margin-right:8px;}
.field{box-sizing:border-box;height:34px;border:1px solid #9a9a9a;display:flex;align-items:center;justify-content:space-between;padding-right:6px;background:#383838;white-space:nowrap;}
.field svg{width:12px;height:8px;margin-left:auto;}
.field-name{width:328px;}
.field-type{width:282px;margin-left:18px;padding-left:3px;color:#eee;}
.btn-row{display:flex;gap:18px;margin-top:8px;}
.btn{box-sizing:border-box;width:132px;height:39px;background:#383838;color:#eee;border:2px solid #c8c8c8;font:inherit;padding:0;}
.btn-main{border-color:#fff;}
.grip{position:absolute;right:3px;bottom:2px;width:12px;height:12px;}

.cursor{position:absolute;left:673px;top:106px;width:20px;height:26px;}

/* job popup */
.job{position:absolute;left:1550px;top:1148px;box-sizing:border-box;width:692px;height:284px;border:2px solid #4a4a4a;background:#2f2f2f;display:flex;flex-direction:column;font-family:"Open Sans","Noto Sans",sans-serif;font-size:17px;color:#eee;white-space:nowrap;}
.job-head{height:48px;flex:none;display:flex;align-items:center;padding-left:16px;}
.job-ico{width:28px;height:36px;margin-right:16px;}
.job-name{padding-right:6px;border-right:1px solid #555;line-height:30px;letter-spacing:-.1px;}
.job-state{margin-left:7px;}
.job-time{margin-left:auto;color:#8a8a8a;}
.job-secs{margin:0 6px 0 22px;}
.job-bar{height:48px;flex:none;display:flex;align-items:center;background:#2a69b0;font-weight:600;padding-left:21px;}
.job-bar svg{width:16px;height:24px;margin-right:23px;}
.job-body{flex:1;min-height:0;display:flex;justify-content:space-between;padding:0 39px 0 14px;}
.job-body p{margin:16px 0 0;line-height:22px;font-size:17.300px;}
.job-wait{display:flex;flex-direction:column;align-items:center;padding-top:14px;}
.pie{width:68px;height:68px;margin-left:16px;border-radius:50%;background:linear-gradient(#6aa6d6,#6aa6d6) 33px 0/1px 32px no-repeat #454545;}
.wait-text{margin-top:7px;color:#b4b4b4;line-height:22px;}
.wait-text small{font-size:17px;color:#8a8a8a;}
.job-foot{height:38px;flex:none;background:#3d3d3d;color:#646464;text-align:center;line-height:38px;font-size:15.700px;}
```
